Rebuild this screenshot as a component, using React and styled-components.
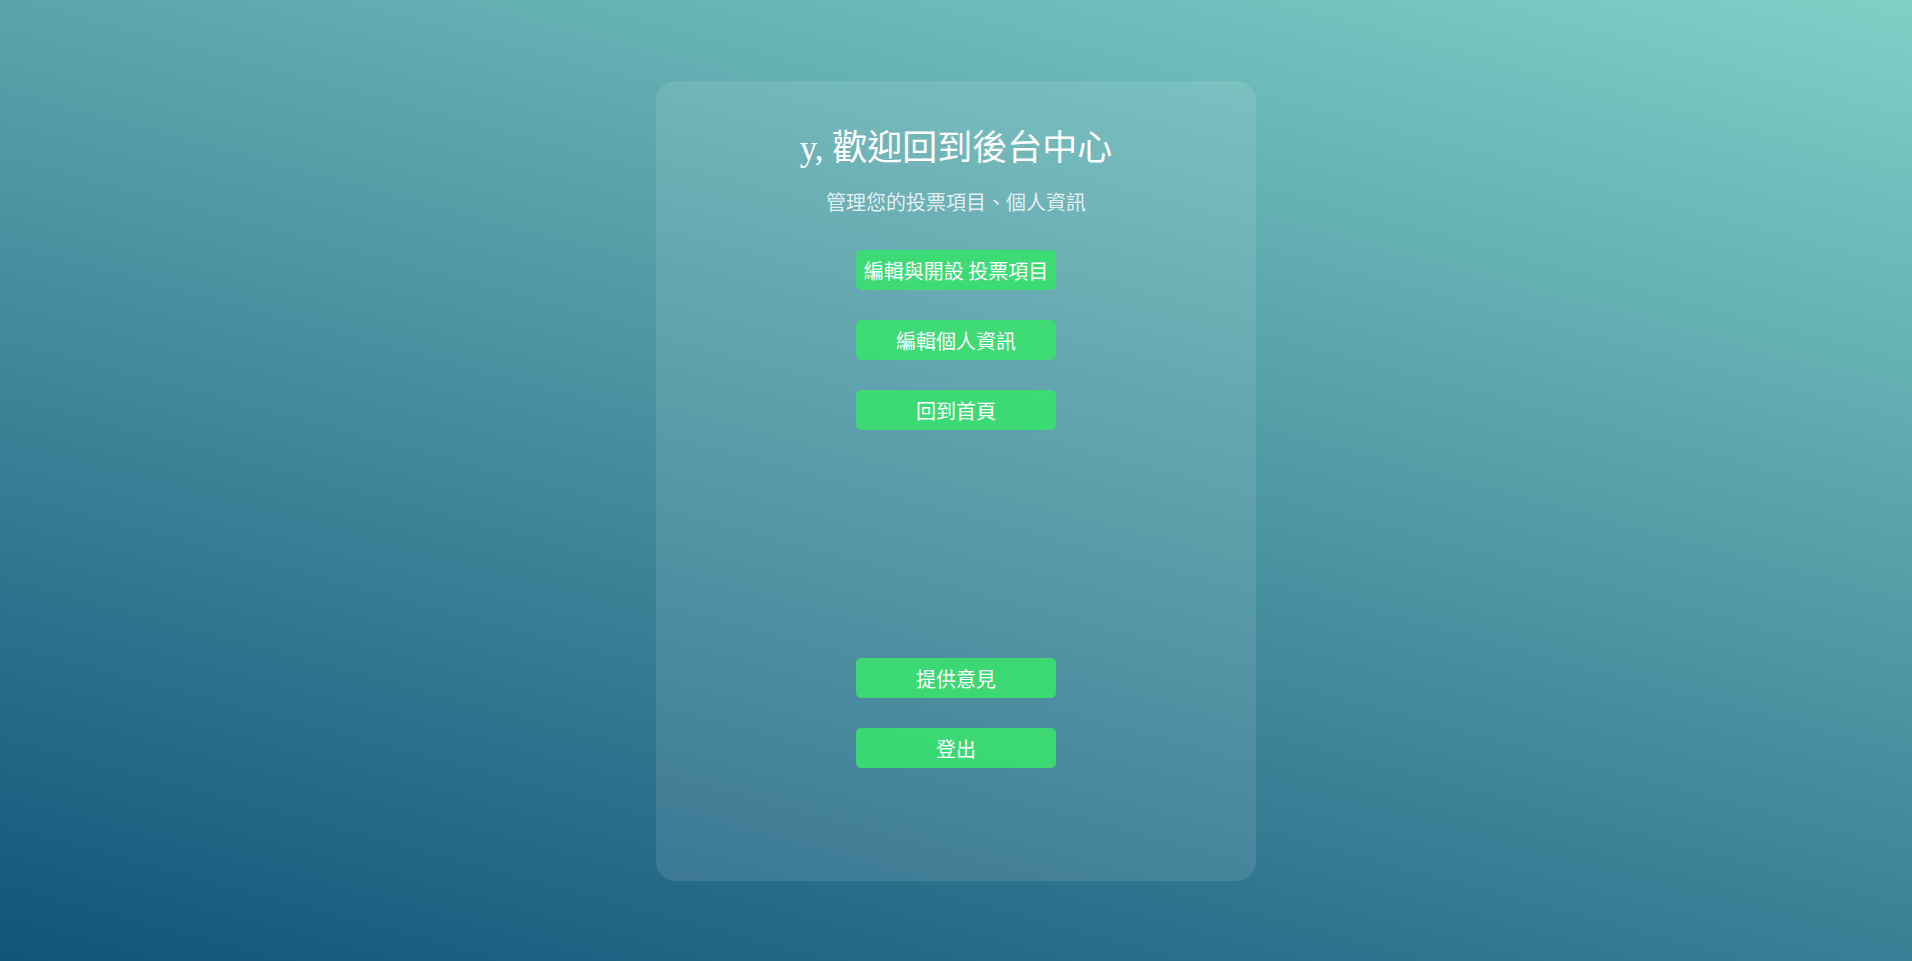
import React from 'react';
import styled, { createGlobalStyle } from 'styled-components';

const GlobalStyles = createGlobalStyle`
  * {
    box-sizing: border-box;
    margin: 0;
    padding: 0;
  }

  html, body, #root {
    min-height: 100%;
  }

  body {
    font-family: 'Liberation Serif', 'Noto Sans CJK TC', serif;
    background: linear-gradient(15deg, #13547a 0%, #80d0c7 100%);
    background-attachment: fixed;
    min-height: 100vh;
  }
`;

const Page = styled.div`
  min-height: 100vh;
  display: flex;
  align-items: center;
  justify-content: center;
`;

const Card = styled.div`
  width: 600px;
  height: 800px;
  padding: 48px 0 113px;
  border-radius: 20px;
  background: rgba(255, 255, 255, 0.1);
  display: flex;
  flex-direction: column;
  align-items: center;
`;

const Title = styled.h1`
  font-size: 35px;
  line-height: 40px;
  font-weight: normal;
  color: #fff;
`;

const Subtitle = styled.p`
  margin-top: 22px;
  font-size: 20px;
  line-height: 24px;
  color: rgba(255, 255, 255, 0.82);
`;

const ButtonGroup = styled.div`
  display: flex;
  flex-direction: column;
  gap: 30px;
  margin-top: ${props => (props.bottom ? 'auto' : '35px')};
`;

const ActionButton = styled.button`
  width: 200px;
  height: 40px;
  padding-top: 2px;
  border: none;
  border-radius: 5px;
  background: rgba(58, 222, 112, 0.92);
  color: #fff;
  font-family: 'Noto Sans CJK TC', sans-serif;
  font-size: 20px;
  cursor: pointer;
  white-space: nowrap;

  &:hover {
    background: #2ecc71;
  }
`;

const App = () => {
  const navItems = ['編輯與開設 投票項目', '編輯個人資訊', '回到首頁'];
  const bottomItems = ['提供意見', '登出'];

  return (
    <>
      <GlobalStyles />
      <Page>
        <Card>
          <Title>y, 歡迎回到後台中心</Title>
          <Subtitle>管理您的投票項目、個人資訊</Subtitle>

          <ButtonGroup>
            {navItems.map(label => (
              <ActionButton key={label}>{label}</ActionButton>
            ))}
          </ButtonGroup>

          <ButtonGroup bottom>
            {bottomItems.map(label => (
              <ActionButton key={label}>{label}</ActionButton>
            ))}
          </ButtonGroup>
        </Card>
      </Page>
    </>
  );
};

export default App;
